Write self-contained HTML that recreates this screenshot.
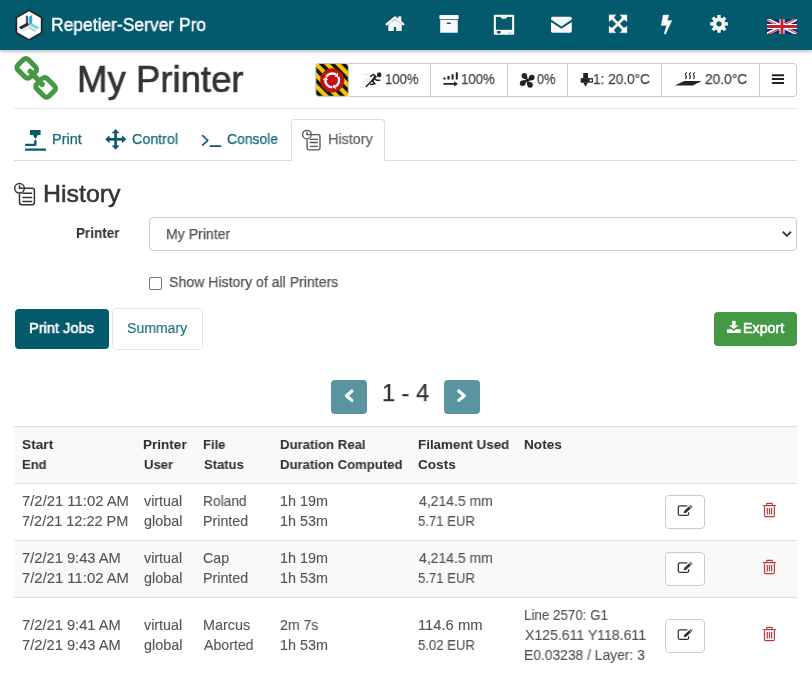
<!DOCTYPE html>
<html><head><meta charset="utf-8"><title>History</title>
<style>
html,body{margin:0;padding:0;background:#fff;width:812px;height:676px;overflow:hidden;position:relative}
body{font-family:"Liberation Sans",sans-serif}
.t{position:absolute;white-space:nowrap;transform-origin:0 0;will-change:transform;-webkit-text-stroke:0.25px currentColor}
.a{position:absolute;box-sizing:content-box}
svg.a{overflow:visible}
</style></head><body>
<div style="position:absolute;left:0;top:0;width:812px;height:50px;background:#025a6c;box-shadow:0 1px 4px rgba(0,0,0,.35)"></div>
<svg class="a" style="left:0;top:0" width="60" height="50" viewBox="0 0 60 50">
<polygon points="29,10.3 41.6,17.6 41.6,32.6 29,39.9 16.4,32.6 16.4,17.6" fill="#fff" stroke="#231f20" stroke-width="1.6"/>
<polygon points="25.8,15.2 28.3,16.6 28.3,25.2 25.8,23.8" fill="#5a5a62"/>
<polygon points="29.2,16.6 32.2,14.9 32.2,23.6 29.2,25.3" fill="#29aae1"/>
<polygon points="19,27 27.6,22.6 29,25.2 21,29.4" fill="#2b2b33"/>
<polygon points="29.2,25.3 32.4,23.6 39.8,27.6 36.8,29.4" fill="#7fd0ee"/>
<polygon points="21.2,30.4 29,26.2 29,28.6 23.4,31.7" fill="#e4e4e4"/>
<polygon points="29,26.2 36.6,30.4 34.6,31.7 29,28.6" fill="#c8c8c8"/>
</svg>
<div class="t" style="left:51.46px;top:17.00px;font-size:17.88px;line-height:17.88px;color:#fff;font-weight:normal;transform:scaleX(0.9767);-webkit-text-stroke:0.4px #fff">Repetier-Server Pro</div>
<svg class="a" style="left:380px;top:10px" width="30" height="26" viewBox="380 10 30 26">
<polyline points="386.6,24.3 395,17.4 403.4,24.3" fill="none" stroke="#f8f8f8" stroke-width="2.3" stroke-linecap="round" stroke-linejoin="round"/>
<rect x="398.2" y="16.4" width="3.1" height="5" fill="#f8f8f8"/>
<polygon points="388.3,24.6 395,19.3 401.7,24.6 401.7,31 396.1,31 396.1,27 393.8,27 393.8,31 388.3,31" fill="#f8f8f8"/>
</svg>
<svg class="a" style="left:434px;top:10px" width="30" height="26" viewBox="434 10 30 26">
<rect x="439.4" y="15" width="19.2" height="4.3" rx="0.8" fill="#f8f8f8"/>
<rect x="440.2" y="20.1" width="17.6" height="12.6" rx="0.5" fill="#f8f8f8"/>
<rect x="446.8" y="22.5" width="4.1" height="1.4" rx="0.7" fill="#025a6c"/>
</svg>
<svg class="a" style="left:489px;top:10px" width="30" height="26" viewBox="489 10 30 26">
<rect x="493.8" y="14.8" width="20.4" height="20" rx="0.6" fill="#f8f8f8"/>
<rect x="495.9" y="16.9" width="16.2" height="12.9" fill="#025a6c"/>
<polygon points="500.9,16.8 506.9,16.8 506.9,17.9 503.9,19 500.9,17.9" fill="#f8f8f8"/>
<rect x="496.9" y="31" width="3.8" height="2.4" rx="0.8" fill="#025a6c"/>
<rect x="507.8" y="32.7" width="3.9" height="0.7" fill="#7aa7b2"/>
</svg>
<svg class="a" style="left:546px;top:10px" width="30" height="26" viewBox="546 10 30 26">
<path d="M552.6,16.7 H570.2 Q571.8,16.7 571.8,18.3 V19.4 L561.4,26.6 L551,19.4 V18.3 Q551,16.7 552.6,16.7 Z" fill="#f8f8f8"/>
<path d="M551,21.9 L561.4,28.8 L571.8,21.9 V31.1 Q571.8,32.7 570.2,32.7 H552.6 Q551,32.7 551,31.1 Z" fill="#f8f8f8"/>
</svg>
<svg class="a" style="left:603px;top:10px" width="30" height="26" viewBox="603 10 30 26">
<g fill="#f8f8f8" stroke="#f8f8f8" stroke-width="0.25" stroke-linejoin="miter">
<g transform="translate(618 23.85) rotate(0)"><polygon points="-9.00,-9.00 -2.00,-9.00 -3.30,-7.70 -3.98,-5.82 0.92,-0.92 -0.92,0.92 -5.82,-3.98 -7.70,-3.30 -9.00,-2.00"/></g><g transform="translate(618 23.85) rotate(90)"><polygon points="-9.00,-9.00 -2.00,-9.00 -3.30,-7.70 -3.98,-5.82 0.92,-0.92 -0.92,0.92 -5.82,-3.98 -7.70,-3.30 -9.00,-2.00"/></g><g transform="translate(618 23.85) rotate(180)"><polygon points="-9.00,-9.00 -2.00,-9.00 -3.30,-7.70 -3.98,-5.82 0.92,-0.92 -0.92,0.92 -5.82,-3.98 -7.70,-3.30 -9.00,-2.00"/></g><g transform="translate(618 23.85) rotate(270)"><polygon points="-9.00,-9.00 -2.00,-9.00 -3.30,-7.70 -3.98,-5.82 0.92,-0.92 -0.92,0.92 -5.82,-3.98 -7.70,-3.30 -9.00,-2.00"/></g></g>
</svg>
<svg class="a" style="left:652px;top:10px" width="30" height="26" viewBox="652 10 30 26">
<polygon points="663.2,15 668.9,15 667.1,20.6 671.8,20.6 665.7,33.9 664.1,33.9 666.6,25.4 661.2,25.4" fill="#f8f8f8" stroke="#f8f8f8" stroke-width="0.4" stroke-linejoin="round"/>
</svg>
<svg class="a" style="left:704px;top:10px" width="30" height="26" viewBox="704 10 30 26">
<rect x="717.3" y="15" width="3.4" height="4" transform="rotate(0 719 23.85)" fill="#f8f8f8"/><rect x="717.3" y="15" width="3.4" height="4" transform="rotate(45 719 23.85)" fill="#f8f8f8"/><rect x="717.3" y="15" width="3.4" height="4" transform="rotate(90 719 23.85)" fill="#f8f8f8"/><rect x="717.3" y="15" width="3.4" height="4" transform="rotate(135 719 23.85)" fill="#f8f8f8"/><rect x="717.3" y="15" width="3.4" height="4" transform="rotate(180 719 23.85)" fill="#f8f8f8"/><rect x="717.3" y="15" width="3.4" height="4" transform="rotate(225 719 23.85)" fill="#f8f8f8"/><rect x="717.3" y="15" width="3.4" height="4" transform="rotate(270 719 23.85)" fill="#f8f8f8"/><rect x="717.3" y="15" width="3.4" height="4" transform="rotate(315 719 23.85)" fill="#f8f8f8"/>
<circle cx="719" cy="23.85" r="6.4" fill="#f8f8f8"/>
<circle cx="719" cy="23.85" r="2.6" fill="#025a6c"/>
</svg>
<svg class="a" style="left:767px;top:19px" width="30" height="15" viewBox="0 0 60 30" preserveAspectRatio="none">
<clipPath id="fs"><path d="M0,0 v30 h60 v-30 z"/></clipPath>
<clipPath id="ft"><path d="M30,15 h30 v15 z v15 h-30 z h-30 v-15 z v-15 h30 z"/></clipPath>
<g clip-path="url(#fs)">
<path d="M0,0 v30 h60 v-30 z" fill="#1a2a6c"/>
<path d="M0,0 L60,30 M60,0 L0,30" stroke="#fff" stroke-width="6"/>
<path d="M0,0 L60,30 M60,0 L0,30" clip-path="url(#ft)" stroke="#c8202f" stroke-width="4"/>
<path d="M30,0 v30 M0,15 h60" stroke="#fff" stroke-width="10"/>
<path d="M30,0 v30 M0,15 h60" stroke="#c8202f" stroke-width="6"/>
</g></svg>
<svg class="a" style="left:0;top:50px" width="70" height="56" viewBox="0 50 70 56">
<g transform="translate(36.2 77.9) rotate(45.2)">
<rect x="-22.0" y="-7.3" width="17.2" height="14.6" rx="3.4" fill="none" stroke="#449944" stroke-width="5.1"/>
<rect x="4.8" y="-7.3" width="17.2" height="14.6" rx="3.4" fill="none" stroke="#449944" stroke-width="5.1"/>
<rect x="-3.6" y="-2.7" width="7.2" height="5.4" fill="#449944"/>
<circle cx="-8.8" cy="-0.4" r="2.7" fill="#449944"/>
<circle cx="8.8" cy="0.4" r="2.7" fill="#449944"/>
</g></svg>
<div class="t" style="left:76.98px;top:61.00px;font-size:37.21px;line-height:37.21px;color:#333;font-weight:normal;transform:scaleX(0.9828);-webkit-text-stroke:0.7px #333">My Printer</div>
<div class="a" style="left:348px;top:63px;width:448px;height:32px;border:1px solid #ccc;border-left:none;border-radius:0 4px 4px 0;background:#fff"></div>
<div class="a" style="left:430.0px;top:64px;width:1px;height:32px;background:#ccc"></div>
<div class="a" style="left:506.7px;top:64px;width:1px;height:32px;background:#ccc"></div>
<div class="a" style="left:567.0px;top:64px;width:1px;height:32px;background:#ccc"></div>
<div class="a" style="left:660.9px;top:64px;width:1px;height:32px;background:#ccc"></div>
<div class="a" style="left:759.3px;top:64px;width:1px;height:32px;background:#ccc"></div>
<svg class="a" style="left:310px;top:58px" width="45" height="44" viewBox="310 58 45 44">
<clipPath id="ec"><rect x="316.2" y="64" width="32" height="32" rx="2"/></clipPath>
<g clip-path="url(#ec)"><rect x="315" y="63" width="34" height="34" fill="#f7c200"/><polygon points="263.0,63 268.0,63 301.0,96 296.0,96" fill="#151515"/><polygon points="274.0,63 279.0,63 312.0,96 307.0,96" fill="#151515"/><polygon points="285.0,63 290.0,63 323.0,96 318.0,96" fill="#151515"/><polygon points="296.0,63 301.0,63 334.0,96 329.0,96" fill="#151515"/><polygon points="307.0,63 312.0,63 345.0,96 340.0,96" fill="#151515"/><polygon points="318.0,63 323.0,63 356.0,96 351.0,96" fill="#151515"/><polygon points="329.0,63 334.0,63 367.0,96 362.0,96" fill="#151515"/><polygon points="340.0,63 345.0,63 378.0,96 373.0,96" fill="#151515"/><polygon points="351.0,63 356.0,63 389.0,96 384.0,96" fill="#151515"/></g>
<rect x="315.7" y="63.5" width="32.6" height="32.8" rx="2.5" fill="none" stroke="#b8bfcc" stroke-width="1"/>
<circle cx="332.2" cy="80.4" r="11.8" fill="#c90f0f" stroke="#5a3a00" stroke-width="0.6"/>
<g fill="none" stroke="#fff" stroke-width="2.4"><path d="M326.22,76.95 A6.9,6.9 0 0 1 336.16,74.75"/><path d="M338.18,76.95 A6.9,6.9 0 0 1 335.12,86.65"/><path d="M332.20,87.30 A6.9,6.9 0 0 1 325.33,79.80"/></g>
<g fill="#fff"><polygon points="337.71,72.54 338.11,76.85 334.61,76.96"/><polygon points="336.26,89.10 332.32,87.30 333.97,84.21"/><polygon points="322.64,79.56 326.17,77.05 328.02,80.03"/></g>
</svg>
<svg class="a" style="left:355px;top:66px" width="40" height="26" viewBox="355 66 40 26">
<g stroke="#dcdcdc" stroke-width="0.7"><line x1="361" y1="74.4" x2="370" y2="74.4"/><line x1="367" y1="76.4" x2="371" y2="76.4"/><line x1="364" y1="79.3" x2="372" y2="79.3"/><line x1="362.5" y1="81.6" x2="370" y2="81.6"/><line x1="362" y1="84.4" x2="368" y2="84.4"/></g>
<ellipse cx="379.2" cy="74.8" rx="2.3" ry="2.5" fill="#1f2229"/>
<polygon points="374,76 376.6,77.3 373.2,81.4 371.6,80.2" fill="#1f2229"/>
<g fill="none" stroke="#1f2229" stroke-width="1.5" stroke-linecap="round" stroke-linejoin="round">
<polyline points="370.8,76.4 373.3,74.3 376,76.6 366.3,86.5"/>
<polyline points="375.6,79.6 376.6,80.2 379.7,80.2"/>
<polyline points="372.5,81.2 375,83.8 370.6,84.6"/>
</g></svg>
<div class="t" style="left:384.62px;top:72.00px;font-size:14.39px;line-height:14.39px;color:#444;font-weight:normal;transform:scaleX(0.9115)">100%</div>
<svg class="a" style="left:438px;top:68px" width="24" height="22" viewBox="438 68 24 22">
<g fill="#1f2229"><rect x="443.4" y="77.4" width="2.2" height="2.2" rx="0.5"/><rect x="447.4" y="76" width="2.2" height="3.6" rx="0.5"/><rect x="451.6" y="74.2" width="2" height="5.4" rx="0.5"/><rect x="455.8" y="72.2" width="2" height="7.4" rx="0.5"/>
<rect x="443.3" y="83" width="12" height="1.8" rx="0.6"/><polygon points="454.2,81.2 458,83.9 454.2,86.5"/></g></svg>
<div class="t" style="left:461.01px;top:72.00px;font-size:14.39px;line-height:14.39px;color:#444;font-weight:normal;transform:scaleX(0.9171)">100%</div>
<svg class="a" style="left:515px;top:68px" width="24" height="22" viewBox="515 68 24 22"><g fill="#1f2229"><g transform="translate(527.2 80.4) rotate(0)"><circle cx="-2.9" cy="-4.6" r="2.75"/><polygon points="0.9,0.5 -0.15,-4.69 -2.9,-4.6 -4.17,-2.16 -0.5,-0.6"/></g><g transform="translate(527.2 80.4) rotate(90)"><circle cx="-2.9" cy="-4.6" r="2.75"/><polygon points="0.9,0.5 -0.15,-4.69 -2.9,-4.6 -4.17,-2.16 -0.5,-0.6"/></g><g transform="translate(527.2 80.4) rotate(180)"><circle cx="-2.9" cy="-4.6" r="2.75"/><polygon points="0.9,0.5 -0.15,-4.69 -2.9,-4.6 -4.17,-2.16 -0.5,-0.6"/></g><g transform="translate(527.2 80.4) rotate(270)"><circle cx="-2.9" cy="-4.6" r="2.75"/><polygon points="0.9,0.5 -0.15,-4.69 -2.9,-4.6 -4.17,-2.16 -0.5,-0.6"/></g><circle cx="527.2" cy="80.4" r="1.4"/></g></svg>
<div class="t" style="left:537.19px;top:72.00px;font-size:14.39px;line-height:14.39px;color:#444;font-weight:normal;transform:scaleX(0.8877)">0%</div>
<svg class="a" style="left:576px;top:68px" width="24" height="22" viewBox="576 68 24 22">
<g fill="#1f2229"><rect x="583.2" y="73" width="4.8" height="5.4"/><rect x="580.7" y="78.1" width="12.2" height="4.6"/><polygon points="583.2,82.5 588,82.5 585.6,86.7"/></g>
<circle cx="590.7" cy="80.4" r="1.2" fill="#fff"/></svg>
<div class="t" style="left:592.58px;top:72.00px;font-size:14.39px;line-height:14.39px;color:#444;font-weight:normal;transform:scaleX(0.9465)">1: 20.0°C</div>
<svg class="a" style="left:670px;top:68px" width="36" height="22" viewBox="670 68 36 22">
<polygon points="674.9,85.6 684.3,81 701.7,81 692.8,85.6" fill="#1f2229"/>
<g fill="none" stroke="#333" stroke-width="1.15" stroke-linecap="round">
<path d="M686.6,72.7 Q684.6,74 685.8,75.5 Q687.2,77 685.6,78.6"/>
<path d="M690.6,72.7 Q688.6,74 689.8,75.5 Q691.2,77 689.6,78.6"/>
<path d="M694.6,72.7 Q692.6,74 693.8,75.5 Q695.2,77 693.6,78.6"/>
</g></svg>
<div class="t" style="left:705.11px;top:72.00px;font-size:14.39px;line-height:14.39px;color:#444;font-weight:normal;transform:scaleX(0.9553)">20.0°C</div>
<svg class="a" style="left:770px;top:72px" width="16" height="14" viewBox="770 72 16 14">
<g fill="#222"><rect x="771.8" y="74.3" width="12.3" height="2" rx="0.6"/><rect x="771.8" y="78.1" width="12.3" height="2" rx="0.6"/><rect x="771.8" y="81.9" width="12.3" height="2" rx="0.6"/></g></svg>
<div class="a" style="left:14px;top:108px;width:783px;height:1px;background:#e8e8e8"></div>
<div class="a" style="left:14px;top:160px;width:783px;height:1px;background:#ddd"></div>
<div class="a" style="left:291px;top:119px;width:92px;height:42px;border:1px solid #ddd;border-bottom:none;border-radius:4px 4px 0 0;background:#fff"></div>
<svg class="a" style="left:20px;top:126px" width="32" height="28" viewBox="20 126 32 28">
<g fill="#0b5b6d"><path d="M30,130 H40.6 V134.9 H37.6 V135.8 L35.4,138.9 L33.2,135.8 V134.9 H30 Z"/><path d="M34.1,141.3 Q34.1,140.1 35.35,140.1 Q36.6,140.1 36.6,141.3 V144.6 Q36.6,146 35.2,146 H25.9 Q25,146 25,145 Q25,143.8 25.9,143.8 H34.1 Z"/><rect x="25" y="148.6" width="21" height="2.2" rx="0.4"/></g></svg>
<div class="t" style="left:51.50px;top:132.00px;font-size:14.39px;line-height:14.39px;color:#14677a;font-weight:normal;transform:scaleX(1.0079)">Print</div>
<svg class="a" style="left:100px;top:126px" width="30" height="26" viewBox="100 126 30 26">
<g fill="#0b5b6d"><rect x="114.25" y="132" width="2.7" height="14.6"/><rect x="108.5" y="137.95" width="14.4" height="2.7"/>
<polygon points="115.6,128.9 119.6,133.2 111.6,133.2"/><polygon points="115.6,149.8 119.6,145.5 111.6,145.5"/>
<polygon points="105.2,139.3 109.5,135.3 109.5,143.3"/><polygon points="126.3,139.3 122,135.3 122,143.3"/></g></svg>
<div class="t" style="left:131.99px;top:132.00px;font-size:14.39px;line-height:14.39px;color:#14677a;font-weight:normal;transform:scaleX(0.9907)">Control</div>
<svg class="a" style="left:198px;top:130px" width="26" height="20" viewBox="198 130 26 20">
<polyline points="202.6,135.6 207.8,140.3 202.6,145.2" fill="none" stroke="#0b5b6d" stroke-width="1.6" stroke-linecap="round" stroke-linejoin="round"/>
<rect x="209.6" y="145.3" width="11.7" height="1.8" rx="0.5" fill="#0b5b6d"/></svg>
<div class="t" style="left:226.90px;top:132.00px;font-size:14.39px;line-height:14.39px;color:#14677a;font-weight:normal;transform:scaleX(0.9681)">Console</div>
<svg class="a" style="left:298px;top:127px" width="26" height="26" viewBox="298 127 26 26">
<g fill="none" stroke="#555" stroke-width="1.35" stroke-linecap="round">
<path d="M310.98,134.60 H318.20 Q320.00,134.60 320.00,136.40 V148.00 Q320.00,149.80 318.20,149.80 H308.90 Q307.10,149.80 307.10,148.00 V139.97"/>
<circle cx="306.9" cy="134.6" r="4.3"/>
<polyline points="306.9,132.23 306.9,134.60 309.91,134.60"/>
<line x1="310.3" y1="139.4" x2="317.4" y2="139.4"/><line x1="310.3" y1="142.5" x2="317.4" y2="142.5"/><line x1="310.3" y1="146.4" x2="317.4" y2="146.4"/></g></svg>
<div class="t" style="left:328.31px;top:132.00px;font-size:14.83px;line-height:14.83px;color:#666;font-weight:normal;transform:scaleX(0.9692)">History</div>
<svg class="a" style="left:10px;top:180px" width="30" height="28" viewBox="10 180 30 28">
<g fill="none" stroke="#333" stroke-width="1.5" stroke-linecap="round">
<path d="M24.06,188.30 H32.20 Q34.40,188.30 34.40,190.50 V202.60 Q34.40,204.80 32.20,204.80 H21.70 Q19.50,204.80 19.50,202.60 V194.30"/>
<circle cx="19.5" cy="188.3" r="4.8"/>
<polyline points="19.5,185.66 19.5,188.30 22.86,188.30"/>
<line x1="23.0" y1="193.3" x2="31.6" y2="193.3"/><line x1="23.0" y1="197.4" x2="31.6" y2="197.4"/><line x1="23.0" y1="201.5" x2="31.6" y2="201.5"/></g></svg>
<div class="t" style="left:42.85px;top:182.00px;font-size:24.71px;line-height:24.71px;color:#333;font-weight:normal;transform:scaleX(1.0079);-webkit-text-stroke:0.5px #333">History</div>
<div class="t" style="left:75.79px;top:226.00px;font-size:14.39px;line-height:14.39px;color:#333;font-weight:bold;transform:scaleX(0.9377);-webkit-text-stroke:0.05px #333">Printer</div>
<div class="a" style="left:149px;top:217px;width:646px;height:32px;border:1px solid #ccc;border-radius:4px;background:#fff"></div>
<div class="t" style="left:165.94px;top:227.00px;font-size:14.53px;line-height:14.53px;color:#555;font-weight:normal;transform:scaleX(0.9708)">My Printer</div>
<svg class="a" style="left:778px;top:226px" width="18" height="16" viewBox="778 226 18 16"><polyline points="782.8,231.8 786.9,235.9 791,231.8" fill="none" stroke="#444" stroke-width="2" stroke-linecap="butt" stroke-linejoin="miter"/></svg>
<div class="a" style="left:149px;top:277px;width:11px;height:11px;border:1px solid #767676;border-radius:2px;background:#fff"></div>
<div class="t" style="left:169.07px;top:275.00px;font-size:14.83px;line-height:14.83px;color:#555;font-weight:normal;transform:scaleX(0.9508)">Show History of all Printers</div>
<div class="a" style="left:15px;top:309px;width:94px;height:40px;border-radius:4px;background:#025a6c"></div>
<div class="t" style="left:28.79px;top:321.00px;font-size:14.83px;line-height:14.83px;color:#fff;font-weight:normal;transform:scaleX(0.9861);-webkit-text-stroke:0.55px #fff">Print Jobs</div>
<div class="a" style="left:112px;top:308px;width:89px;height:40px;border:1px solid #e6e6e6;border-radius:4px;background:#fff"></div>
<div class="t" style="left:126.87px;top:321.00px;font-size:14.83px;line-height:14.83px;color:#14677a;font-weight:normal;transform:scaleX(0.9488);-webkit-text-stroke:0.1px #14677a">Summary</div>
<div class="a" style="left:714px;top:312px;width:83px;height:34px;border-radius:4px;background:#449944"></div>
<svg class="a" style="left:720px;top:314px" width="26" height="26" viewBox="720 314 26 26"><g fill="#fff">
<rect x="732.1" y="320.8" width="3.5" height="4.6"/><polygon points="729,325.2 738.6,325.2 733.8,329"/>
<path d="M726.9,329.2 H731.6 L733.8,331 L736,329.2 H740.8 V333 H726.9 Z"/></g></svg>
<div class="t" style="left:742.72px;top:322.00px;font-size:13.95px;line-height:13.95px;color:#fff;font-weight:normal;transform:scaleX(1.0238);-webkit-text-stroke:0.55px #fff">Export</div>
<div class="a" style="left:331px;top:380px;width:36px;height:34px;border-radius:4px;background:#5a949f"></div>
<div class="a" style="left:444px;top:380px;width:36px;height:34px;border-radius:4px;background:#5a949f"></div>
<svg class="a" style="left:331px;top:380px" width="36" height="34" viewBox="331 380 36 34"><polyline points="351.9,391 346.4,395.7 351.9,400.4" fill="none" stroke="#fff" stroke-width="3.2" stroke-linecap="round" stroke-linejoin="round"/></svg>
<svg class="a" style="left:444px;top:380px" width="36" height="34" viewBox="444 380 36 34"><polyline points="458.8,391 464.3,395.7 458.8,400.4" fill="none" stroke="#fff" stroke-width="3.2" stroke-linecap="round" stroke-linejoin="round"/></svg>
<div class="t" style="left:381.93px;top:381.00px;font-size:23.84px;line-height:23.84px;color:#333;font-weight:normal;transform:scaleX(0.9883)">1 - 4</div>
<div class="a" style="left:14px;top:426px;width:783px;height:57px;background:#f9f9f9;border-top:1px solid #ddd"></div>
<div class="a" style="left:14px;top:483px;width:783px;height:1px;background:#ddd"></div>
<div class="a" style="left:14px;top:540px;width:783px;height:1px;background:#ddd"></div>
<div class="a" style="left:14px;top:541px;width:783px;height:56px;background:#f9f9f9"></div>
<div class="a" style="left:14px;top:597px;width:783px;height:1px;background:#ddd"></div>
<div class="t" style="left:21.99px;top:438.00px;font-size:13.40px;line-height:13.40px;color:#333;font-weight:bold;transform:scaleX(1.0251);-webkit-text-stroke:0.05px #333">Start</div>
<div class="t" style="left:21.52px;top:458.00px;font-size:13.40px;line-height:13.40px;color:#333;font-weight:bold;transform:scaleX(0.9738);-webkit-text-stroke:0.05px #333">End</div>
<div class="t" style="left:143.38px;top:438.00px;font-size:13.40px;line-height:13.40px;color:#333;font-weight:bold;transform:scaleX(1.0116);-webkit-text-stroke:0.05px #333">Printer</div>
<div class="t" style="left:143.51px;top:458.00px;font-size:13.40px;line-height:13.40px;color:#333;font-weight:bold;transform:scaleX(0.9788);-webkit-text-stroke:0.05px #333">User</div>
<div class="t" style="left:203.12px;top:438.00px;font-size:13.40px;line-height:13.40px;color:#333;font-weight:bold;transform:scaleX(0.9705);-webkit-text-stroke:0.05px #333">File</div>
<div class="t" style="left:203.61px;top:458.00px;font-size:13.40px;line-height:13.40px;color:#333;font-weight:bold;transform:scaleX(0.9725);-webkit-text-stroke:0.05px #333">Status</div>
<div class="t" style="left:280.01px;top:438.00px;font-size:13.40px;line-height:13.40px;color:#333;font-weight:bold;transform:scaleX(0.9829);-webkit-text-stroke:0.05px #333">Duration Real</div>
<div class="t" style="left:280.01px;top:458.00px;font-size:13.40px;line-height:13.40px;color:#333;font-weight:bold;transform:scaleX(0.9807);-webkit-text-stroke:0.05px #333">Duration Computed</div>
<div class="t" style="left:417.80px;top:438.00px;font-size:13.40px;line-height:13.40px;color:#333;font-weight:bold;transform:scaleX(0.9965);-webkit-text-stroke:0.05px #333">Filament Used</div>
<div class="t" style="left:418.16px;top:458.00px;font-size:13.40px;line-height:13.40px;color:#333;font-weight:bold;transform:scaleX(1.0153);-webkit-text-stroke:0.05px #333">Costs</div>
<div class="t" style="left:523.98px;top:438.00px;font-size:13.40px;line-height:13.40px;color:#333;font-weight:bold;transform:scaleX(1.0174);-webkit-text-stroke:0.05px #333">Notes</div>
<div class="t" style="left:21.56px;top:494.00px;font-size:14.20px;line-height:14.20px;color:#555;font-weight:normal;transform:scaleX(1.0458);-webkit-text-stroke:0.12px #555">7/2/21 11:02 AM</div>
<div class="t" style="left:21.57px;top:514.00px;font-size:14.20px;line-height:14.20px;color:#555;font-weight:normal;transform:scaleX(1.0214);-webkit-text-stroke:0.12px #555">7/2/21 12:22 PM</div>
<div class="t" style="left:144.46px;top:494.00px;font-size:14.20px;line-height:14.20px;color:#555;font-weight:normal;transform:scaleX(1.0086);-webkit-text-stroke:0.12px #555">virtual</div>
<div class="t" style="left:143.89px;top:514.00px;font-size:14.20px;line-height:14.20px;color:#555;font-weight:normal;transform:scaleX(1.0123);-webkit-text-stroke:0.12px #555">global</div>
<div class="t" style="left:202.86px;top:494.00px;font-size:14.20px;line-height:14.20px;color:#555;font-weight:normal;transform:scaleX(0.9693);-webkit-text-stroke:0.12px #555">Roland</div>
<div class="t" style="left:202.82px;top:514.00px;font-size:14.20px;line-height:14.20px;color:#555;font-weight:normal;transform:scaleX(1.0042);-webkit-text-stroke:0.12px #555">Printed</div>
<div class="t" style="left:279.92px;top:494.00px;font-size:14.20px;line-height:14.20px;color:#555;font-weight:normal;transform:scaleX(1.0117);-webkit-text-stroke:0.12px #555">1h 19m</div>
<div class="t" style="left:279.92px;top:514.00px;font-size:14.20px;line-height:14.20px;color:#555;font-weight:normal;transform:scaleX(1.0117);-webkit-text-stroke:0.12px #555">1h 53m</div>
<div class="t" style="left:418.58px;top:494.00px;font-size:14.20px;line-height:14.20px;color:#555;font-weight:normal;transform:scaleX(0.9860);-webkit-text-stroke:0.12px #555">4,214.5 mm</div>
<div class="t" style="left:418.37px;top:514.00px;font-size:14.20px;line-height:14.20px;color:#555;font-weight:normal;transform:scaleX(0.9252);-webkit-text-stroke:0.12px #555">5.71 EUR</div>
<div class="t" style="left:21.57px;top:551.00px;font-size:14.20px;line-height:14.20px;color:#555;font-weight:normal;transform:scaleX(1.0347);-webkit-text-stroke:0.12px #555">7/2/21 9:43 AM</div>
<div class="t" style="left:21.56px;top:571.00px;font-size:14.20px;line-height:14.20px;color:#555;font-weight:normal;transform:scaleX(1.0458);-webkit-text-stroke:0.12px #555">7/2/21 11:02 AM</div>
<div class="t" style="left:144.46px;top:551.00px;font-size:14.20px;line-height:14.20px;color:#555;font-weight:normal;transform:scaleX(1.0086);-webkit-text-stroke:0.12px #555">virtual</div>
<div class="t" style="left:143.89px;top:571.00px;font-size:14.20px;line-height:14.20px;color:#555;font-weight:normal;transform:scaleX(1.0123);-webkit-text-stroke:0.12px #555">global</div>
<div class="t" style="left:203.29px;top:551.00px;font-size:14.20px;line-height:14.20px;color:#555;font-weight:normal;transform:scaleX(1.0000);-webkit-text-stroke:0.12px #555">Cap</div>
<div class="t" style="left:202.82px;top:571.00px;font-size:14.20px;line-height:14.20px;color:#555;font-weight:normal;transform:scaleX(1.0042);-webkit-text-stroke:0.12px #555">Printed</div>
<div class="t" style="left:279.92px;top:551.00px;font-size:14.20px;line-height:14.20px;color:#555;font-weight:normal;transform:scaleX(1.0117);-webkit-text-stroke:0.12px #555">1h 19m</div>
<div class="t" style="left:279.92px;top:571.00px;font-size:14.20px;line-height:14.20px;color:#555;font-weight:normal;transform:scaleX(1.0117);-webkit-text-stroke:0.12px #555">1h 53m</div>
<div class="t" style="left:418.58px;top:551.00px;font-size:14.20px;line-height:14.20px;color:#555;font-weight:normal;transform:scaleX(0.9860);-webkit-text-stroke:0.12px #555">4,214.5 mm</div>
<div class="t" style="left:418.37px;top:571.00px;font-size:14.20px;line-height:14.20px;color:#555;font-weight:normal;transform:scaleX(0.9252);-webkit-text-stroke:0.12px #555">5.71 EUR</div>
<div class="t" style="left:21.57px;top:618.00px;font-size:14.20px;line-height:14.20px;color:#555;font-weight:normal;transform:scaleX(1.0347);-webkit-text-stroke:0.12px #555">7/2/21 9:41 AM</div>
<div class="t" style="left:21.57px;top:638.00px;font-size:14.20px;line-height:14.20px;color:#555;font-weight:normal;transform:scaleX(1.0347);-webkit-text-stroke:0.12px #555">7/2/21 9:43 AM</div>
<div class="t" style="left:144.46px;top:618.00px;font-size:14.20px;line-height:14.20px;color:#555;font-weight:normal;transform:scaleX(1.0086);-webkit-text-stroke:0.12px #555">virtual</div>
<div class="t" style="left:143.89px;top:638.00px;font-size:14.20px;line-height:14.20px;color:#555;font-weight:normal;transform:scaleX(1.0123);-webkit-text-stroke:0.12px #555">global</div>
<div class="t" style="left:202.81px;top:618.00px;font-size:14.20px;line-height:14.20px;color:#555;font-weight:normal;transform:scaleX(1.0118);-webkit-text-stroke:0.12px #555">Marcus</div>
<div class="t" style="left:203.96px;top:638.00px;font-size:14.20px;line-height:14.20px;color:#555;font-weight:normal;transform:scaleX(0.9956);-webkit-text-stroke:0.12px #555">Aborted</div>
<div class="t" style="left:280.30px;top:618.00px;font-size:14.20px;line-height:14.20px;color:#555;font-weight:normal;transform:scaleX(0.9906);-webkit-text-stroke:0.12px #555">2m 7s</div>
<div class="t" style="left:279.92px;top:638.00px;font-size:14.20px;line-height:14.20px;color:#555;font-weight:normal;transform:scaleX(1.0117);-webkit-text-stroke:0.12px #555">1h 53m</div>
<div class="t" style="left:417.79px;top:618.00px;font-size:14.20px;line-height:14.20px;color:#555;font-weight:normal;transform:scaleX(1.0399);-webkit-text-stroke:0.12px #555">114.6 mm</div>
<div class="t" style="left:418.37px;top:638.00px;font-size:14.20px;line-height:14.20px;color:#555;font-weight:normal;transform:scaleX(0.9252);-webkit-text-stroke:0.12px #555">5.02 EUR</div>
<div class="t" style="left:524.30px;top:608.00px;font-size:14.20px;line-height:14.20px;color:#555;font-weight:normal;transform:scaleX(0.9420);-webkit-text-stroke:0.12px #555">Line 2570: G1</div>
<div class="t" style="left:525.08px;top:628.00px;font-size:14.20px;line-height:14.20px;color:#555;font-weight:normal;transform:scaleX(0.9915);-webkit-text-stroke:0.12px #555">X125.611 Y118.611</div>
<div class="t" style="left:524.26px;top:648.00px;font-size:14.20px;line-height:14.20px;color:#555;font-weight:normal;transform:scaleX(0.9758);-webkit-text-stroke:0.12px #555">E0.03238 / Layer: 3</div>
<div class="a" style="left:665px;top:495px;width:38px;height:32px;border:1px solid #ccc;border-radius:4px;background:#fff"></div>
<svg class="a" style="left:675px;top:502px" width="20" height="20" viewBox="675 502 20 20">
<path d="M687.3,505.8 H679.8 Q678.3,505.8 678.3,507.3 V513.9 Q678.3,515.4 679.8,515.4 H687.1 Q688.6,515.4 688.6,513.9 V512.2" fill="none" stroke="#333" stroke-width="1.25"/>
<polygon points="683.50,513.3 686.18,512.66 691.02,508.18 689.19,506.2 684.35,510.68" fill="#333"/><polygon points="691.54,507.71 692.42,506.89 690.58,504.91 689.70,505.72" fill="#333"/></svg>
<svg class="a" style="left:760px;top:502px" width="20" height="20" viewBox="760 502 20 20">
<g fill="none" stroke="#b83c3c" stroke-width="1.2" stroke-linejoin="round">
<path d="M764.5,506.4 V515.5 Q764.5,516.7 765.7,516.7 H773.2 Q774.4,516.7 774.4,515.5 V506.4"/>
<line x1="762.8" y1="505.6" x2="776.1" y2="505.6"/>
<path d="M766.6,505.3 V504.0 Q766.6,503.3 767.3,503.3 H771.6 Q772.3,503.3 772.3,504.0 V505.3"/>
<line x1="767.3" y1="508.0" x2="767.3" y2="514.4"/><line x1="769.45" y1="508.0" x2="769.45" y2="514.4"/><line x1="771.6" y1="508.0" x2="771.6" y2="514.4"/>
</g></svg>
<div class="a" style="left:665px;top:552px;width:38px;height:32px;border:1px solid #ccc;border-radius:4px;background:#fff"></div>
<svg class="a" style="left:675px;top:559px" width="20" height="20" viewBox="675 559 20 20">
<path d="M687.3,562.8 H679.8 Q678.3,562.8 678.3,564.3 V570.9 Q678.3,572.4 679.8,572.4 H687.1 Q688.6,572.4 688.6,570.9 V569.2" fill="none" stroke="#333" stroke-width="1.25"/>
<polygon points="683.50,570.3 686.18,569.66 691.02,565.18 689.19,563.2 684.35,567.68" fill="#333"/><polygon points="691.54,564.71 692.42,563.89 690.58,561.91 689.70,562.72" fill="#333"/></svg>
<svg class="a" style="left:760px;top:559px" width="20" height="20" viewBox="760 559 20 20">
<g fill="none" stroke="#b83c3c" stroke-width="1.2" stroke-linejoin="round">
<path d="M764.5,563.4 V572.5 Q764.5,573.7 765.7,573.7 H773.2 Q774.4,573.7 774.4,572.5 V563.4"/>
<line x1="762.8" y1="562.6" x2="776.1" y2="562.6"/>
<path d="M766.6,562.3 V561.0 Q766.6,560.3 767.3,560.3 H771.6 Q772.3,560.3 772.3,561.0 V562.3"/>
<line x1="767.3" y1="565.0" x2="767.3" y2="571.4"/><line x1="769.45" y1="565.0" x2="769.45" y2="571.4"/><line x1="771.6" y1="565.0" x2="771.6" y2="571.4"/>
</g></svg>
<div class="a" style="left:665px;top:619px;width:38px;height:32px;border:1px solid #ccc;border-radius:4px;background:#fff"></div>
<svg class="a" style="left:675px;top:626px" width="20" height="20" viewBox="675 626 20 20">
<path d="M687.3,629.8 H679.8 Q678.3,629.8 678.3,631.3 V637.9 Q678.3,639.4 679.8,639.4 H687.1 Q688.6,639.4 688.6,637.9 V636.2" fill="none" stroke="#333" stroke-width="1.25"/>
<polygon points="683.50,637.3 686.18,636.66 691.02,632.18 689.19,630.2 684.35,634.68" fill="#333"/><polygon points="691.54,631.71 692.42,630.89 690.58,628.91 689.70,629.72" fill="#333"/></svg>
<svg class="a" style="left:760px;top:626px" width="20" height="20" viewBox="760 626 20 20">
<g fill="none" stroke="#b83c3c" stroke-width="1.2" stroke-linejoin="round">
<path d="M764.5,630.4 V639.5 Q764.5,640.7 765.7,640.7 H773.2 Q774.4,640.7 774.4,639.5 V630.4"/>
<line x1="762.8" y1="629.6" x2="776.1" y2="629.6"/>
<path d="M766.6,629.3 V628.0 Q766.6,627.3 767.3,627.3 H771.6 Q772.3,627.3 772.3,628.0 V629.3"/>
<line x1="767.3" y1="632.0" x2="767.3" y2="638.4"/><line x1="769.45" y1="632.0" x2="769.45" y2="638.4"/><line x1="771.6" y1="632.0" x2="771.6" y2="638.4"/>
</g></svg>
</body></html>
